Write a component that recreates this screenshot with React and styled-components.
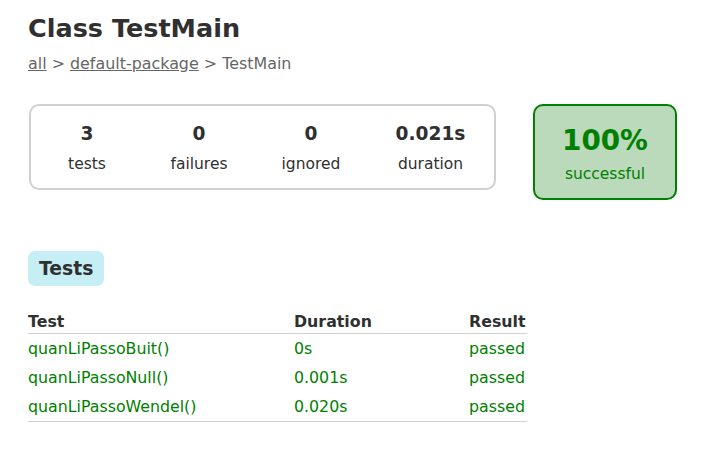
import styled, { createGlobalStyle } from "styled-components";

const GlobalStyle = createGlobalStyle`
  body {
    margin: 0;
    padding: 0;
    font-family: "DejaVu Sans", sans-serif;
    font-size: 15.5px;
    color: #303030;
    background: #fff;
  }
`;

const Content = styled.div`
  padding: 10px 28px;
`;

const Title = styled.h1`
  margin: 0;
  font-size: 25.5px;
  font-weight: bold;
  line-height: 37px;
  color: #303030;
`;

const Breadcrumbs = styled.div`
  margin-top: 7px;
  font-size: 15.9px;
  line-height: 20px;
  color: #666;

  a {
    color: #666;
    text-decoration: underline;
  }
`;

const Summary = styled.div`
  display: flex;
  align-items: flex-start;
  margin-top: 30px;
  margin-left: 1px;
`;

const SummaryGroup = styled.div`
  display: grid;
  grid-template-columns: 112px 112px 112px 127px;
  width: 463px;
  border: 2px solid #d0d0d0;
  border-radius: 10px;
  padding: 17px 0 14px;
`;

const InfoBox = styled.div`
  text-align: center;
`;

const Counter = styled.div`
  font-size: 18.6px;
  font-weight: bold;
  line-height: 22px;
  margin-bottom: 9px;
`;

const Label = styled.div`
  line-height: 20px;
`;

const SuccessRate = styled.div`
  width: 140px;
  margin-left: 37px;
  padding: 18px 0 14px;
  text-align: center;
  border: 2px solid #008000;
  border-radius: 10px;
  background: #bbd9bb;
  color: #008000;
`;

const Percent = styled.div`
  font-size: 27.8px;
  font-weight: bold;
  line-height: 34px;
  margin-bottom: 6px;
`;

const Tab = styled.div`
  display: inline-block;
  margin-top: 51px;
  padding: 0 11px;
  height: 35px;
  line-height: 35px;
  font-size: 18.8px;
  font-weight: bold;
  background: #c5eff5;
  border-radius: 7px;
`;

const Table = styled.table`
  margin-top: 25px;
  border-collapse: collapse;
  table-layout: fixed;
  width: 499px;
  border-bottom: 1px solid #d0d0d0;
  font-size: 15.8px;

  th {
    text-align: left;
    font-weight: bold;
    padding: 0;
    height: 22px;
    line-height: 22px;
    border-bottom: 1px solid #d0d0d0;
    vertical-align: bottom;
  }

  td {
    padding: 0;
    height: 29px;
    line-height: 29px;
    color: #008000;
    white-space: nowrap;
  }
`;

const tests = [
  { name: "quanLiPassoBuit()", duration: "0s", result: "passed" },
  { name: "quanLiPassoNull()", duration: "0.001s", result: "passed" },
  { name: "quanLiPassoWendel()", duration: "0.020s", result: "passed" },
];

const counters = [
  { value: "3", label: "tests" },
  { value: "0", label: "failures" },
  { value: "0", label: "ignored" },
  { value: "0.021s", label: "duration" },
];

export default function App() {
  return (
    <>
      <GlobalStyle />
      <Content>
        <Title>Class TestMain</Title>
        <Breadcrumbs>
          <a href="#">all</a> &gt; <a href="#">default-package</a> &gt; TestMain
        </Breadcrumbs>
        <Summary>
          <SummaryGroup>
            {counters.map((c) => (
              <InfoBox key={c.label}>
                <Counter>{c.value}</Counter>
                <Label>{c.label}</Label>
              </InfoBox>
            ))}
          </SummaryGroup>
          <SuccessRate>
            <Percent>100%</Percent>
            <Label>successful</Label>
          </SuccessRate>
        </Summary>
        <Tab>Tests</Tab>
        <Table>
          <colgroup>
            <col style={{ width: 266 }} />
            <col style={{ width: 175 }} />
            <col style={{ width: 58 }} />
          </colgroup>
          <thead>
            <tr>
              <th>Test</th>
              <th>Duration</th>
              <th>Result</th>
            </tr>
          </thead>
          <tbody>
            {tests.map((t) => (
              <tr key={t.name}>
                <td>{t.name}</td>
                <td>{t.duration}</td>
                <td>{t.result}</td>
              </tr>
            ))}
          </tbody>
        </Table>
      </Content>
    </>
  );
}
